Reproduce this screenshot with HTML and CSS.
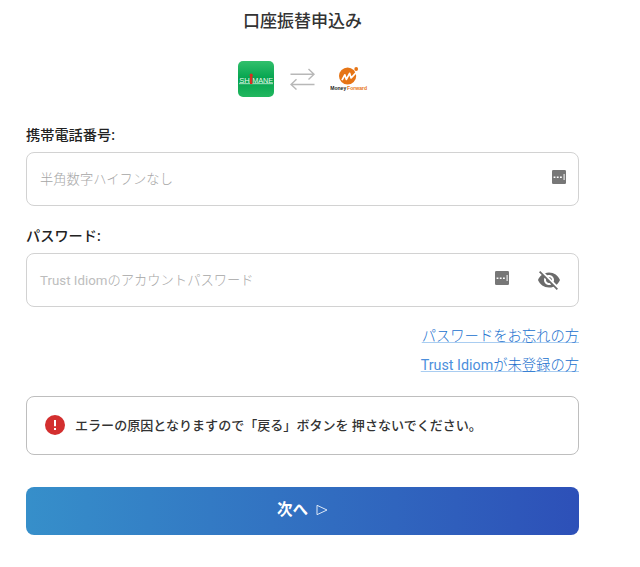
FILE: index.html
```html
<!DOCTYPE html>
<html lang="ja">
<head>
<meta charset="utf-8">
<title>口座振替申込み</title>
<link rel="stylesheet" href="styles.css">
</head>
<body>
<main class="page">
  <h1 class="title">口座振替申込み</h1>
  <div class="brands">
    <svg class="bank" viewBox="0 0 36 36">
      <defs><linearGradient id="green" x1="0" y1="0" x2="0" y2="1"><stop offset="0" stop-color="#32c06c"/><stop offset=".5" stop-color="#03a34e"/><stop offset="1" stop-color="#22b75f"/></linearGradient></defs>
      <rect width="36" height="36" rx="5" fill="url(#green)"/>
      <text class="bank-text" x="1.3" y="22" textLength="10.5" lengthAdjust="spacingAndGlyphs">SH</text>
      <text class="bank-text" x="14.2" y="22" textLength="21" lengthAdjust="spacingAndGlyphs">MANE</text>
      <path d="M1 22.7H35" stroke="#d8f3e3" stroke-width=".8"/>
      <path d="M12 15.5h2.4V23H12z" fill="#e02a20"/><circle cx="13.2" cy="14.2" r="1.6" fill="#e02a20"/>
    </svg>
    <svg class="swap" viewBox="0 0 26 22" fill="none" stroke="#b8b8b8" stroke-width="1.4"><path d="M.5 6.3H24M18.5 1l5.5 5.3-5.5 5.2M24.5 16.5H1M6.5 11.2L1 16.5l5.5 5"/></svg>
    <svg class="forward" viewBox="0 0 38 26">
      <circle cx="17.6" cy="10" r="8.6" fill="#e67516"/><circle cx="26.2" cy="3" r="1.9" fill="#e67516"/>
      <path d="M12 14.2l2.8-5.4 1.6 4.6 3.2-6.1 1.5 4.7 5.2-5.6" fill="none" stroke="#fff" stroke-width="1.7" stroke-linejoin="round"/>
      <text class="forward-text" x=".2" y="24" textLength="16" lengthAdjust="spacingAndGlyphs" fill="#222">Money</text>
      <text class="forward-text" x="17" y="24" textLength="20.2" lengthAdjust="spacingAndGlyphs" fill="#e67516">Forward</text>
    </svg>
  </div>

  <div class="label">携帯電話番号:</div>
  <div class="field">
    <span class="placeholder">半角数字ハイフンなし</span>
    <svg class="key" viewBox="0 0 14 14"><rect width="14" height="14" rx="1.3" fill="#777"/><path d="M1.6 6.4h1.8v1.6H1.6zM4.8 6.4h1.8v1.6H4.8zM8 6.4h1.8v1.6H8zM11.6 4h1v6h-1z" fill="#fff"/></svg>
  </div>

  <div class="label second">パスワード:</div>
  <div class="field">
    <span class="placeholder"><span class="latin">Trust Idiom</span>のアカウントパスワード</span>
    <svg class="key key-password" viewBox="0 0 14 14"><rect width="14" height="14" rx="1.3" fill="#777"/><path d="M1.6 6.4h1.8v1.6H1.6zM4.8 6.4h1.8v1.6H4.8zM8 6.4h1.8v1.6H8zM11.6 4h1v6h-1z" fill="#fff"/></svg>
    <svg class="eye" viewBox="0 0 24 24" fill="#6b6b6b"><path d="M12 7c2.76 0 5 2.24 5 5 0 .65-.13 1.26-.36 1.83l2.92 2.92c1.51-1.26 2.7-2.89 3.43-4.75-1.73-4.39-6-7.5-11-7.5-1.4 0-2.74.25-3.98.7l2.16 2.16C10.74 7.13 11.35 7 12 7zM2 4.27l2.28 2.28.46.46C3.08 8.3 1.78 10.02 1 12c1.73 4.39 6 7.5 11 7.5 1.55 0 3.03-.3 4.38-.84l.42.42L19.73 22 21 20.73 3.27 3 2 4.27zM7.53 9.8l1.55 1.55c-.05.21-.08.43-.08.65 0 1.66 1.34 3 3 3 .22 0 .44-.03.65-.08l1.55 1.55c-.67.33-1.41.53-2.2.53-2.76 0-5-2.24-5-5 0-.79.2-1.53.53-2.2zm4.31-.78l3.15 3.15.02-.16c0-1.66-1.34-3-3-3l-.17.01z"/></svg>
  </div>

  <nav class="links"><a href="#">パスワードをお忘れの方</a><a href="#"><span class="latin">Trust Idiom</span>が未登録の方</a></nav>

  <div class="notice">
    <svg class="alert" viewBox="0 0 20 20"><circle cx="10" cy="10" r="10" fill="#d32f2f"/><path d="M9 5h2v6.2H9zM9 13h2v2H9z" fill="#fff"/></svg>
    <span>エラーの原因となりますので「戻る」ボタンを 押さないでください。</span>
  </div>
  <button class="next"><span>次へ</span><svg class="arrow" viewBox="0 0 12 12"><path d="M1 1.3L11 6 1 10.7z" fill="none" stroke="#dce8f7"/></svg></button>
</main>
</body>
</html>
```
FILE: styles.css
```css
* { box-sizing: border-box; }
body { margin: 0; background: #fff; font-family: Roboto, "Noto Sans CJK JP", sans-serif; color: #333; }
.page { width: 553px; margin-left: 26px; padding-top: 9px; display: flex; flex-direction: column; }
.title { margin: 0; height: 24px; line-height: 24px; text-align: center; font-size: 17px; font-weight: 500; }
.brands { display: flex; height: 36px; margin: 28px 0 0 212px; }
.bank { width: 36px; height: 36px; }
.bank-text { font: 7.8px "Liberation Sans", sans-serif; fill: #e6f8ed; }
.swap { width: 26px; height: 22px; margin: 7px 0 0 16px; }
.forward { width: 38px; height: 26px; margin: 5px 0 0 14px; }
.forward-text { font: 700 5.5px "Liberation Sans", sans-serif; }
.label { height: 20px; line-height: 20px; margin-top: 28px; font-size: 14.2px; font-weight: 500; color: #222; }
.label.second { margin-top: 20px; }
.field { height: 54px; margin-top: 7px; padding: 0 12px 0 13px; border: 1px solid #d2d2d2; border-radius: 8px; display: flex; align-items: center; }
.placeholder { flex: 1; padding-top: 2px; font-size: 13.3px; font-weight: 300; color: #a6a6a6; line-height: 20px; white-space: nowrap; }
.latin { font-weight: 400; }
.placeholder .latin { color: #bdbdbd; }
.key { width: 14px; height: 14px; margin-bottom: 4px; }
.key-password { margin-right: 28px; }
.eye { width: 24px; height: 24px; margin-right: 5px; }
.links { display: flex; flex-direction: column; align-items: flex-end; margin-top: 15px; }
.links a { height: 29px; line-height: 29px; color: #2070ce; font-size: 14.3px; font-weight: 300; text-decoration-color: #a9cdf1; text-decoration-thickness: 1px; text-underline-offset: 1px; white-space: nowrap; }
.links .latin { color: #4c8fdc; }
.notice { height: 59px; margin-top: 16px; padding: 0 18px 2px; border: 1px solid #bebebe; border-radius: 8px; display: flex; align-items: center; gap: 10px; font-size: 13.05px; font-weight: 500; white-space: nowrap; }
.alert { width: 20px; height: 20px; }
.next { height: 48px; margin-top: 32px; padding: 0 0 2px; border: 0; border-radius: 8px; background: linear-gradient(90deg, #368fca, #2d50b8); color: #fff; display: flex; align-items: center; justify-content: center; gap: 8px; font: 700 15.5px/24px Roboto, "Noto Sans CJK JP", sans-serif; }
.arrow { width: 12px; height: 12px; }
```
